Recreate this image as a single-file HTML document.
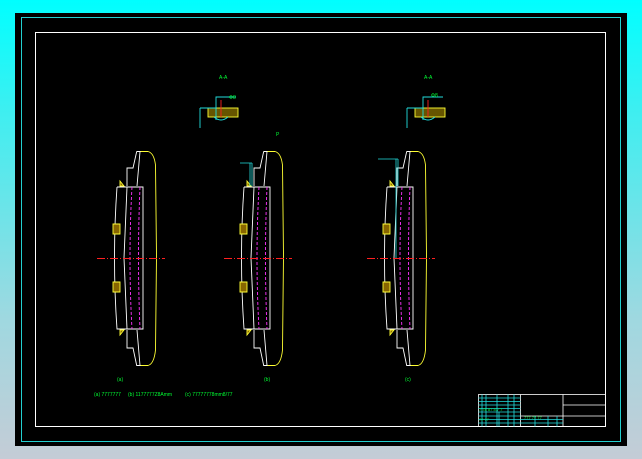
<!DOCTYPE html>
<html><head><meta charset="utf-8"><style>
html,body{margin:0;padding:0;width:642px;height:459px;overflow:hidden;background:linear-gradient(#00ffff 0%,#40eef0 25%,#a0d8e0 70%,#c4ccd6 100%);}
svg{display:block}
text{font-family:"Liberation Sans",sans-serif;fill:#00ff33;font-size:5px}
</style></head><body>
<svg width="642" height="459" viewBox="0 0 642 459" xmlns="http://www.w3.org/2000/svg">
<rect x="15" y="13" width="612" height="433" fill="#000"/>
<rect x="21.5" y="17.5" width="599" height="424" fill="none" stroke="#22d0d0" stroke-width="1"/>
<rect x="35.5" y="32.5" width="570" height="394" fill="none" stroke="#fff" stroke-width="1"/>
<defs>
<g id="part" fill="none" stroke-width="0.9">
 <path d="M136.7 151.5 L148 151.5 Q154 153 155.5 165 L156.5 256 L155.5 350 Q154 364 148 365.5 L136.7 365.5" stroke="#ffff33"/>
 <path d="M136.7 151.5 L133 168 L127 168 L127 186 M136.7 151.5 L140 151.5 L137 186 M117 187 L143 187 L143 329 L117 329 Q112 258 117 187 M127 187 L124 258 L127 329 M127 330 L127 348 L133 348 L136.7 365.5 L140 365.5 L137 330" stroke="#fff"/>
 <path d="M132 187 Q128 258 132 329 M140 187 Q137 258 140 329" stroke="#ff33ff" stroke-dasharray="3,2"/>
 <path d="M97 258.5 L165 258.5" stroke="#ff2020" stroke-dasharray="8,2,1,2"/>
 <path d="M113 224 L120 224 L120 234 L113 234 Z M113 282 L120 282 L120 292 L113 292 Z M120 181 L124 186 L120 186 Z M120 330 L124 330 L120 335 Z" stroke="#ffff33" fill="#886600"/>
</g>
<g id="sec" fill="none" stroke-width="0.9">
 <rect x="208" y="108" width="30" height="9" stroke="#ffff33" fill="#665500"/>
 <path d="M200 108 L216 108 L216 97 L236 97 M216 108 L216 120 M200 108 L200 128" stroke="#22dddd"/>
 <path d="M221 100 L221 117" stroke="#ff2020"/>
 <path d="M214 117 Q221 123 228 117" stroke="#22dddd"/>
</g>
</defs>
<use href="#part"/>
<use href="#part" transform="translate(127,0)"/>
<use href="#part" transform="translate(270,0)"/>
<path d="M240 163 L252 163 M250 163 L250 186 M252 163 L252 186" stroke="#22dddd" fill="none" stroke-width="0.8"/>
<path d="M378 159 L398 159 M396 159 L396 258 M398 159 L398 186" stroke="#22dddd" fill="none" stroke-width="0.8"/>
<use href="#sec"/>
<use href="#sec" transform="translate(207,0)"/>
<text x="219" y="79">A-A</text><text x="424" y="79">A-A</text>
<text x="276" y="136">P</text>
<text x="229" y="99">Φ8</text><text x="431" y="97">Φ8</text>
<text x="117" y="381">(a)</text><text x="264" y="381">(b)</text><text x="405" y="381">(c)</text>
<text x="94" y="396">(a)  7777777</text>
<text x="128" y="396">(b)  1177777Z8Amm</text>
<text x="185" y="396">(c)   77777778mm8/77</text>
<g fill="none" stroke-width="0.8">
 <rect x="478.5" y="394.5" width="127" height="32" stroke="#fff"/>
 <path d="M563 394.5 V426.5 M563 405 H605.5 M563 416 H605.5 M520.5 394.5 V426.5 M520.5 416 H563" stroke="#fff"/>
 <path d="M478.5 398 H520.5 M478.5 401.5 H520.5 M478.5 405 H520.5 M478.5 408.5 H520.5 M478.5 412 H520.5 M478.5 416 H520.5 M478.5 419.5 H563 M478.5 423 H563 M482 394.5 V426.5 M486 394.5 V426.5 M497 394.5 V426.5 M508 394.5 V426.5 M514 394.5 V426.5 M535 416 V426.5 M548 416 V426.5 M557 416 V426.5 M499 412 V426.5" stroke="#22dddd"/>
</g>
<text x="479" y="411" style="font-size:4px">7.78  87  8.7 7</text>
<text x="479" y="421" style="font-size:4px">77   77</text>
<text x="524" y="419" style="font-size:4px">777 77 77</text>
</svg>
</body></html>
